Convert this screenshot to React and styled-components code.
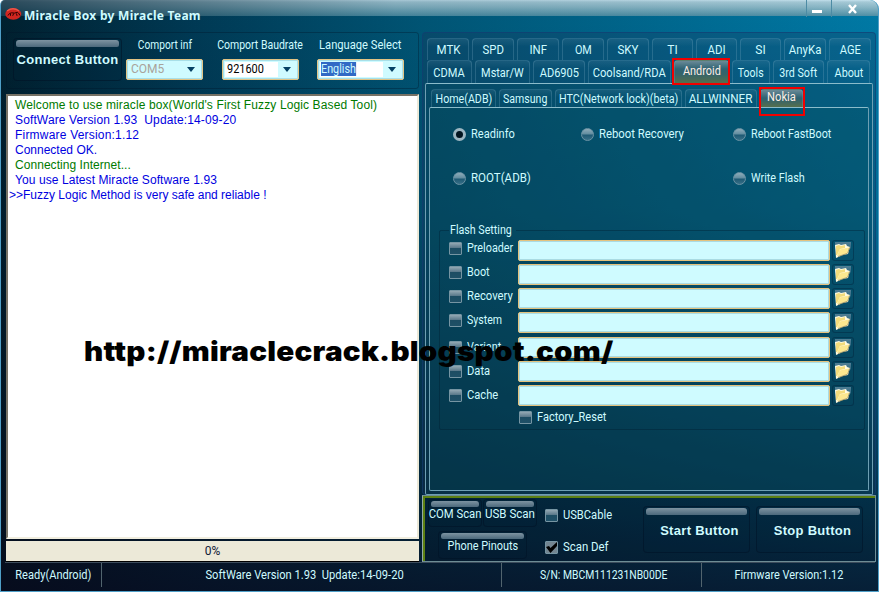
import React, { useState } from 'react';

import styled, { createGlobalStyle, css } from 'styled-components';

const GlobalStyle = createGlobalStyle`
    body {
        margin: 0;
        background: #fff;
        overflow: hidden;
    }
    * {
        box-sizing: border-box;
    }
`;

const ink = '#cffbff';
const uiFont = "Roboto, 'Liberation Sans', sans-serif";

const Window = styled.div`
    position: relative;
    display: flex;
    flex-direction: column;
    width: 879px;
    height: 592px;
    overflow: hidden;
    border: 1px solid #4f9fc8;
    border-top: 0;
    border-radius: 5px 9px 0 0;
    font: 12px/14px ${uiFont};
    white-space: pre;
    color: ${ink};
    background:
        linear-gradient(180deg, rgba(6, 6, 22, 0) 0%, rgba(6, 8, 22, 0.12) 35%, rgba(6, 8, 22, 0.62) 85%, rgba(8, 6, 24, 0.78) 100%),
        linear-gradient(90deg, #00202f 0%, #003a55 22%, #005575 48%, #00688f 75%, #007aa6 100%);
`;

/* narrows a run of text to the condensed look of the system font */
const Narrow = styled.span`
    display: inline-block;
    flex: none;
    transform: scaleX(${props => props.sx || 0.91});
    transform-origin: ${props => props.start ? 'left' : 'center'};
`;

const TitleBar = styled.header`
    display: flex;
    align-items: flex-start;
    height: 32px;
    flex: none;
    padding: 7px 4px 0 4px;
    background:
        linear-gradient(90deg, rgba(0, 30, 48, 0.75), rgba(0, 50, 75, 0.15) 45%, transparent) 0 0 / 100% 16px no-repeat,
        linear-gradient(180deg, #c5e2ed 0, #a5c9d6 2px, #8ab7c6 7px, #4e8fa5 16px) 0 0 / 100% 16px no-repeat;
`;

const Title = styled.h1`
    margin: 1px 0 0 2px;
    flex: 1;
    font: bold 12px/15px 'Noto Sans', sans-serif;
    letter-spacing: 0.28px;
`;

const WindowButton = styled.button`
    width: ${props => props.wide ? 43 : 25}px;
    height: 17px;
    margin-top: -7px;
    padding: 0;
    border: 0;
    border-left: 1px solid #4c8ba4;
    background: none;
    line-height: 0;
`;

const Body = styled.main`
    display: flex;
    height: 530px;
    flex: none;
`;

const LeftColumn = styled.section`
    width: 418px;
    padding-left: 5px;
    margin-right: 3px;
    flex: none;
`;

const PortPanel = styled.div`
    display: flex;
    height: 57px;
    padding: 5px 6px 0;
    border: 1px solid rgba(0, 20, 40, 0.35);
    border-radius: 3px;
`;

const PushButton = styled.button`
    display: flex;
    flex-direction: column;
    flex: none;
    width: ${props => props.w}px;
    height: ${props => props.h}px;
    padding: 1px 2px 0;
    border: 1px solid rgba(0, 15, 35, 0.45);
    border-radius: 4px;
    background: rgba(0, 35, 60, 0.12);
    color: ${ink};
    font: 12px/14px ${uiFont};
    white-space: nowrap;

    &::before {
        content: '';
        align-self: stretch;
        height: ${props => props.big ? 7 : 6}px;
        margin-bottom: ${props => props.gap || 0}px;
        border-radius: 3px 3px 2px 2px;
        background: linear-gradient(180deg, #7d93a1, #4c697c);
    }

    & > span {
        align-self: center;
        padding-left: ${props => props.indent || 0}px;
    }

    ${props => props.big && css`
        font: bold 13px/17px 'Liberation Sans', sans-serif;
        letter-spacing: ${props.spacing || 0.3}px;
    `}
`;

const PortField = styled.div`
    width: ${props => props.w}px;
    margin-left: ${props => props.left}px;
    padding-top: 1px;
    flex: none;
`;

const PortLabel = styled.div`
    display: flex;
    justify-content: center;
    height: 20px;
    line-height: 13px;
`;

const Combo = styled.div`
    display: flex;
    align-items: stretch;
    height: 21px;
    margin-left: ${props => props.shift || 0}px;
    border: 1px solid #e3c484;
    border-radius: 2px;
    background: ${ink};
    padding: 2px;
    box-shadow: inset 0 0 0 1px #a8dfe8;
`;

const ComboValue = styled.span`
    flex: 1;
    padding: 0 2px;
    background: ${props => props.disabled ? 'transparent' : '#fff'};
    color: ${props => props.disabled ? '#a9a39a' : '#000'};
`;

const Selected = styled(Narrow)`
    height: 14px;
    margin-left: -1px;
    background: #316ac5;
    color: ${ink};
`;

const ComboArrow = styled.span`
    width: 18px;
    display: grid;
    place-items: center;
`;

const Log = styled.div`
    height: 445px;
    margin-top: 5px;
    padding: 2px 2px 0 1px;
    border: 2px solid #777266;
    border-right-color: #ece9d8;
    border-bottom-color: #f1eedf;
    background: #fff;
    font: 12px/15px 'Liberation Sans', sans-serif;
`;

const LogLine = styled.div`
    padding-left: ${props => props.flush ? 0 : 6}px;
    color: ${props => props.green ? '#007a00' : '#0000e0'};
    letter-spacing: ${props => props.spacing || 0}px;
`;

const Progress = styled.div`
    height: 21px;
    margin-top: 2px;
    border-bottom: 1px solid #000;
    background: #ece9d8;
    color: #102038;
    line-height: 20px;
    text-align: center;
`;

const RightColumn = styled.section`
    width: 454px;
    flex: none;
`;

const Tabs = styled.div`
    height: 463px;
    padding: 5px 2px 0;
    border: 1px solid rgba(20, 60, 115, 0.6);
    border-radius: 4px;
    background: rgba(25, 50, 85, 0.28);
`;

const TabRow = styled.div`
    display: flex;
    gap: 3px;
    padding-left: 2px;
    height: ${props => props.h}px;
`;

const Tab = styled.button`
    flex: none;
    width: ${props => props.w}px;
    padding: ${props => props.top || 0}px 0 0;
    border: 1px solid rgba(120, 170, 195, 0.28);
    border-bottom: 0;
    border-radius: 4px 4px 0 0;
    background: linear-gradient(180deg, rgba(130, 170, 190, 0.14), rgba(130, 170, 190, 0) 8px);
    color: ${ink};
    font: 12px/14px ${uiFont};
    white-space: nowrap;
    display: flex;
    justify-content: center;

    ${props => props.marked && css`
        position: relative;
        background: linear-gradient(180deg, #6a8a97 0, #2f6272 8px, #35646a 60%, #566f4c 100%);
        color: #ffeee6;

        &::after {
            content: '';
            position: absolute;
            inset: ${props.marked};
            border: 2px solid #f20000;
        }
    `}
`;

const Page = styled.div`
    height: ${props => props.h}px;
    border: 1px solid #6e9fb3;
    border-top-color: #8bbccb;
    border-radius: 2px;
    padding: ${props => props.pad};
    background: rgba(0, 80, 90, 0.16);
`;

const ModeGrid = styled.div`
    display: grid;
    grid-template-columns: 128px 152px 120px;
    grid-auto-rows: 44px;
    height: 115px;
    padding: 19px 0 0 23px;

    & > :last-child {
        grid-column: 3;
    }
`;

const Option = styled.label`
    display: flex;
    align-items: flex-start;
    gap: 5px;
    padding-top: ${props => props.drop || 0}px;
    line-height: ${props => props.line || 14}px;
`;

const RadioDot = styled.i`
    width: 13px;
    height: 13px;
    margin-top: 1px;
    border: 1px solid #6c93a5;
    border-radius: 50%;
    background: linear-gradient(180deg, #8facb9 0, #628da0 45%, #1f5a74 55%, #376f87 100%);

    ${props => props.on && css`
        border: 3px solid #9db7c2;
        background: #02141f;
    `}
`;

const Box = styled.i`
    display: block;
    flex: none;
    width: 13px;
    height: 13px;
    margin-top: ${props => props.top ?? 2}px;
    border: 1px solid #7695a3;
    border-radius: 1px;
    background: linear-gradient(180deg, #93a8b3 0, #587789 45%, #1d4d63 50%, #1f5067 100%);

    & > svg {
        display: block;
    }
`;

const FlashGroup = styled.fieldset`
    width: 426px;
    height: 207px;
    margin: 0 0 0 9px;
    padding: 0 0 0 9px;
    min-width: 0;
    border: 1px solid rgba(0, 30, 48, 0.38);
    border-radius: 2px;
`;

const Legend = styled.legend`
    width: 67px;
    height: 14px;
    padding: 0 0 0 1px;
`;

const FileList = styled.div`
    display: grid;
    grid-template-rows: repeat(3, 24px) 25px repeat(3, 24px);
    margin-top: 3px;
`;

const FileRow = styled.div`
    display: grid;
    grid-template-columns: 69px 312px 22px;
`;

const PathInput = styled.input`
    width: 312px;
    height: 21px;
    border: 1px solid #e5c27d;
    border-radius: 2px;
    background: ${ink};
    box-shadow: inset 0 0 0 1px #a9dbe3;
    outline: 0;
`;

const BrowseButton = styled.button`
    width: 22px;
    height: 21px;
    margin-left: 2px;
    padding: 0 1px 0 0;
    border: 1px solid rgba(0, 30, 55, 0.4);
    border-radius: 3px;
    background: linear-gradient(180deg, #527f95 0, #326a82 6px, transparent 7px) 2px 1px / 16px 18px no-repeat;
`;

const ResetRow = styled.div`
    padding: 1px 0 0 70px;
`;

const Actions = styled.div`
    display: flex;
    height: 67px;
    padding: 2px 0 0 4px;
    border: 1px solid #6d8d95;
    border-left-color: #95aaa5;
    box-shadow: inset 2px 2px 0 #5c8012;
    background: rgba(0, 22, 32, 0.14);
`;

const ScanButtons = styled.div`
    display: flex;
    flex-wrap: wrap;
    align-content: flex-start;
    width: 118px;
    gap: 4px 1px;
    padding: 1px 0 0 1px;

    & > :last-child {
        margin-left: 10px;
    }
`;

const Checks = styled.div`
    display: flex;
    flex-direction: column;
    gap: 18px;
    width: 96px;
    padding: 10px 0 0 0;
`;

const RunButtons = styled.div`
    display: flex;
    gap: 6px;
    padding: 8px 0 0 2px;
`;

const StatusBar = styled.footer`
    display: flex;
    height: 30px;
    flex: none;
    margin: 0 3px 0 4px;
    padding-bottom: 5px;
    border-top: 1px solid #3c4c5c;
`;

const Status = styled.div`
    display: flex;
    justify-content: center;
    width: ${props => props.w}px;
    padding: 5px 0 0 ${props => props.indent || 0}px;
    border-right: ${props => props.last ? 0 : '1px solid #51646e'};
`;

const Watermark = styled.div`
    position: absolute;
    left: 83px;
    top: 334px;
    color: #000;
    font: 900 27px/36px Inter, 'Liberation Sans', sans-serif;
    letter-spacing: 0.2px;
    transform: scaleX(1.098);
    transform-origin: left;
    pointer-events: none;
`;

const Logo = () => (
    <svg width="17" height="14" viewBox="0 0 17 14">
        <ellipse cx="8.3" cy="7" rx="8" ry="5.8" fill="#d02620" />
        <path d="M2 4Q8 -.5 14 4" fill="none" stroke="#ef5548" strokeWidth="1.4" />
        <path d="M3 8.500l1.500-2 2-.7 3 .3 3-.8 1.500 1.500 1 1.700M5.500 6.500v2.300M8.700 6.500l-1 2.300M11.500 6.500l.5 2.300" fill="none" stroke="#2a0000" strokeWidth="1" />
    </svg>
);

const Arrow = () => <svg width="8" height="5"><path d="M0 0H8L4 5Z" fill="#054064" /></svg>;

const Folder = () => (
    <svg width="18" height="17" viewBox="0 0 18 17">
        <path d="M1 4l4-1 2 1 5-1 1 2 3 1-2 7-5 1-7 3z" fill="#fffbe2" />
        <path d="M2 5l3-1 2 1 4-1v3L6 8 3 14 2 14z" fill="#f3dc7c" />
        <path d="M5.500 8.500l9.500-2-2 5.800-10 2.700z" fill="#fce88f" />
        <path d="M15.500 6.500l-2 6M13 12.500l-9 3" stroke="#8d7a3a" strokeWidth=".7" fill="none" />
    </svg>
);

const Tick = () => (
    <svg width="11" height="11" viewBox="0 0 11 11">
        <rect width="11" height="11" fill="#738591" />
        <path d="M0 5l3-1 1.500 2L11 0v4L4.500 11z" fill="#000" />
    </svg>
);

const topTabs = [
    ['MTK', 42, 0.96], ['SPD', 42, 0.95], ['INF', 42, 0.95], ['OM', 42, 0.9], ['SKY', 42, 0.96],
    ['TI', 41, 1], ['ADI', 41, 0.95], ['SI', 41, 1], ['AnyKa', 42, 0.95], ['AGE', 42, 0.93],
];

const middleTabs = [
    ['CDMA', 45, 0.92], ['Mstar/W', 55, 0.91], ['AD6905', 52, 0.92], ['Coolsand/RDA', 83, 0.93],
    ['Android', 55, 0.91], ['Tools', 38, 0.88], ['3rd Soft', 51, 0.89], ['About', 43, 0.9],
];

const brandTabs = [
    ['Home(ADB)', 65, 0.89], ['Samsung', 53, 0.88], ['HTC(Network lock)(beta)', 127, 0.895],
    ['ALLWINNER', 72, 0.98], ['Nokia', 43, 0.93],
];

const modes = [
    ['Readinfo', 0.92], ['Reboot Recovery', 0.945], ['Reboot FastBoot', 0.9], ['ROOT(ADB)', 0.96], ['Write Flash', 0.9],
];

const partitions = [
    ['Preloader', 0.9], ['Boot', 0.9], ['Recovery', 0.94], ['System', 0.88], ['Variant', 0.9], ['Data', 0.93], ['Cache', 0.93],
];

const PortCombo = ({ label, sx, w, left, disabled, children }) => (
    <PortField w={w} left={left}>
        <PortLabel><Narrow sx={sx}>{label}</Narrow></PortLabel>
        <Combo>
            <ComboValue disabled={disabled}>{children}</ComboValue>
            <ComboArrow><Arrow /></ComboArrow>
        </Combo>
    </PortField>
);

export default function App() {
    const [mode, setMode] = useState('Readinfo');

    return (
        <>
            <GlobalStyle />
            <Window>
                <TitleBar>
                    <Logo />
                    <Title>Miracle Box by Miracle Team</Title>
                    <WindowButton>
                        <svg width="23" height="17"><path d="M4 10h10v3H4z" fill="#fff" /></svg>
                    </WindowButton>
                    <WindowButton wide>
                        <svg width="42" height="17"><path d="M17 5l7 8M24 5l-7 8" stroke="#fff" strokeWidth="2.4" /></svg>
                    </WindowButton>
                </TitleBar>
                <Body>
                    <LeftColumn>
                        <PortPanel>
                            <PushButton big w={109} h={43} gap={4} spacing={0.33}><span>Connect Button</span></PushButton>
                            <PortCombo label="Comport inf" sx={0.85} w={77} left={4} disabled>COM5</PortCombo>
                            <PortCombo label="Comport Baudrate" sx={0.875} w={77} left={19}>
                                <Narrow start>921600</Narrow>
                            </PortCombo>
                            <PortCombo label="Language Select" sx={0.93} w={87} left={18}>
                                <Selected sx={0.9} start>English</Selected>
                            </PortCombo>
                        </PortPanel>
                        <Log>
                            <LogLine green spacing={0.12}>Welcome to use miracle box(World's First Fuzzy Logic Based Tool)</LogLine>
                            <LogLine spacing={0.13}>SoftWare Version 1.93  Update:14-09-20</LogLine>
                            <LogLine spacing={0.2}>Firmware Version:1.12</LogLine>
                            <LogLine>Connected OK.</LogLine>
                            <LogLine green spacing={0.05}>Connecting Internet...</LogLine>
                            <LogLine spacing={0.08}>You use Latest Miracte Software 1.93</LogLine>
                            <LogLine flush>&gt;&gt;Fuzzy Logic Method is very safe and reliable !</LogLine>
                        </Log>
                        <Progress>0%</Progress>
                    </LeftColumn>
                    <RightColumn>
                        <Tabs>
                            <TabRow h={22}>
                                {topTabs.map(([name, w, sx]) => (
                                    <Tab key={name} w={w} top={4}><Narrow sx={sx}>{name}</Narrow></Tab>
                                ))}
                            </TabRow>
                            <TabRow h={23}>
                                {middleTabs.map(([name, w, sx]) => (
                                    <Tab
                                        key={name}
                                        w={w}
                                        top={name === 'Android' ? 3 : 5}
                                        marked={name === 'Android' && '-3px -2px -2px -3px'}>
                                        <Narrow sx={sx}>{name}</Narrow>
                                    </Tab>
                                ))}
                            </TabRow>
                            <Page h={412} pad="5px 3px 3px">
                                <TabRow h={18}>
                                    {brandTabs.map(([name, w, sx]) => (
                                        <Tab
                                            key={name}
                                            w={w}
                                            top={name === 'Nokia' ? 0 : 2}
                                            marked={name === 'Nokia' && '-3px -3px -9px -2px'}>
                                            <Narrow sx={sx}>{name}</Narrow>
                                        </Tab>
                                    ))}
                                </TabRow>
                                <Page h={384} pad="0">
                                    <ModeGrid>
                                        {modes.map(([name, sx]) => (
                                            <Option key={name} onClick={() => setMode(name)}>
                                                <RadioDot on={mode === name} />
                                                <Narrow sx={sx} start>{name}</Narrow>
                                            </Option>
                                        ))}
                                    </ModeGrid>
                                    <FlashGroup>
                                        <Legend><Narrow sx={0.89} start>Flash Setting</Narrow></Legend>
                                        <FileList>
                                            {partitions.map(([name, sx], i) => (
                                                <FileRow key={name}>
                                                    <Option line={16} drop={i > 3 ? 2 : 0}>
                                                        <Box />
                                                        <Narrow sx={sx} start>{name}</Narrow>
                                                    </Option>
                                                    <PathInput />
                                                    <BrowseButton><Folder /></BrowseButton>
                                                </FileRow>
                                            ))}
                                        </FileList>
                                        <ResetRow>
                                            <Option><Box top={1} /><Narrow sx={0.92} start>Factory_Reset</Narrow></Option>
                                        </ResetRow>
                                    </FlashGroup>
                                </Page>
                            </Page>
                        </Tabs>
                        <Actions>
                            <ScanButtons>
                                <PushButton w={54} h={28}><Narrow sx={0.94}>COM Scan</Narrow></PushButton>
                                <PushButton w={54} h={28}><Narrow sx={0.96}>USB Scan</Narrow></PushButton>
                                <PushButton w={89} h={28}><Narrow>Phone Pinouts</Narrow></PushButton>
                            </ScanButtons>
                            <Checks>
                                <Option><Box top={1} /><Narrow sx={0.93} start>USBCable</Narrow></Option>
                                <Option><Box top={1}><Tick /></Box><Narrow sx={0.95} start>Scan Def</Narrow></Option>
                            </Checks>
                            <RunButtons>
                                <PushButton big w={107} h={47} gap={7} indent={6}><span>Start Button</span></PushButton>
                                <PushButton big w={107} h={47} gap={7} indent={6}><span>Stop Button</span></PushButton>
                            </RunButtons>
                        </Actions>
                    </RightColumn>
                </Body>
                <StatusBar>
                    <Status w={97}><Narrow sx={0.92}>Ready(Android)</Narrow></Status>
                    <Status w={400} indent={6}><Narrow sx={0.93}>SoftWare Version 1.93  Update:14-09-20</Narrow></Status>
                    <Status w={200} indent={4}><Narrow sx={0.865}>S/N: MBCM111231NB00DE</Narrow></Status>
                    <Status w={173} last><Narrow sx={0.91}>Firmware Version:1.12</Narrow></Status>
                </StatusBar>
                <Watermark>http://miraclecrack.blogspot.com/</Watermark>
            </Window>
        </>
    );
}
